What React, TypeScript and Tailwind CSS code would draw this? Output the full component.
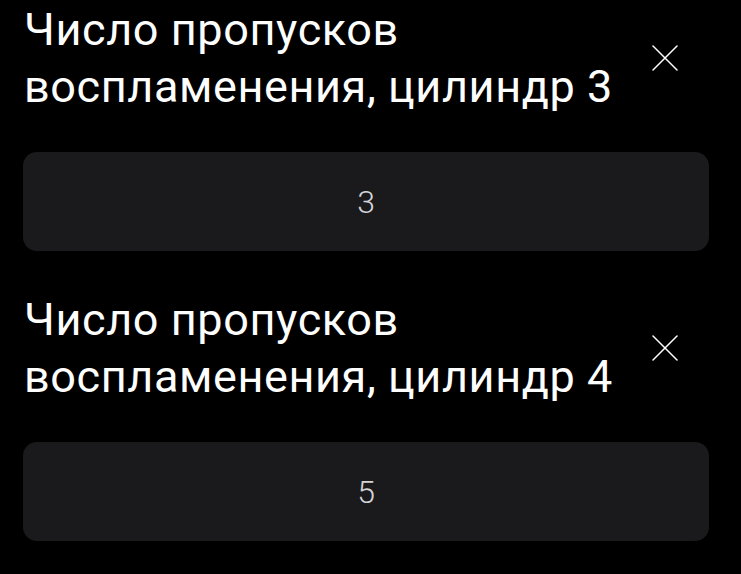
import React from "react";

interface Field {
  id: string;
  label: string;
  value: string;
}

const fields: Field[] = [
  { id: "cyl3", label: "Число пропусков воспламенения, цилиндр 3", value: "3" },
  { id: "cyl4", label: "Число пропусков воспламенения, цилиндр 4", value: "5" },
];

function CloseIcon() {
  return (
    <svg width="26" height="26" viewBox="0 0 26 26" fill="none" stroke="#ffffff" strokeWidth="1.5" strokeLinecap="round">
      <path d="M1 1L25 25M25 1L1 25" />
    </svg>
  );
}

export default function App() {
  return (
    <div
      className="w-[741px] h-[574px] bg-black overflow-hidden"
      style={{ fontFamily: "Roboto, 'Noto Sans', sans-serif" }}
    >
      {fields.map((f) => (
        <div key={f.id} className="h-[290px] pt-[1px]">
          <div className="flex items-center pl-[24px] pr-[63px]">
            <h3 className="flex-1 text-white text-[45px] leading-[57px] font-normal tracking-[0.6px]">{f.label}</h3>
            <button className="w-[26px] h-[26px] flex items-center justify-center">
              <CloseIcon />
            </button>
          </div>
          <div className="mt-[37px] ml-[23px] w-[686px] h-[99px] rounded-[14px] bg-[#1a1a1c] flex items-center justify-center">
            <span className="text-[32px] font-light text-[#d4d4d8] leading-none">{f.value}</span>
          </div>
        </div>
      ))}
    </div>
  );
}
